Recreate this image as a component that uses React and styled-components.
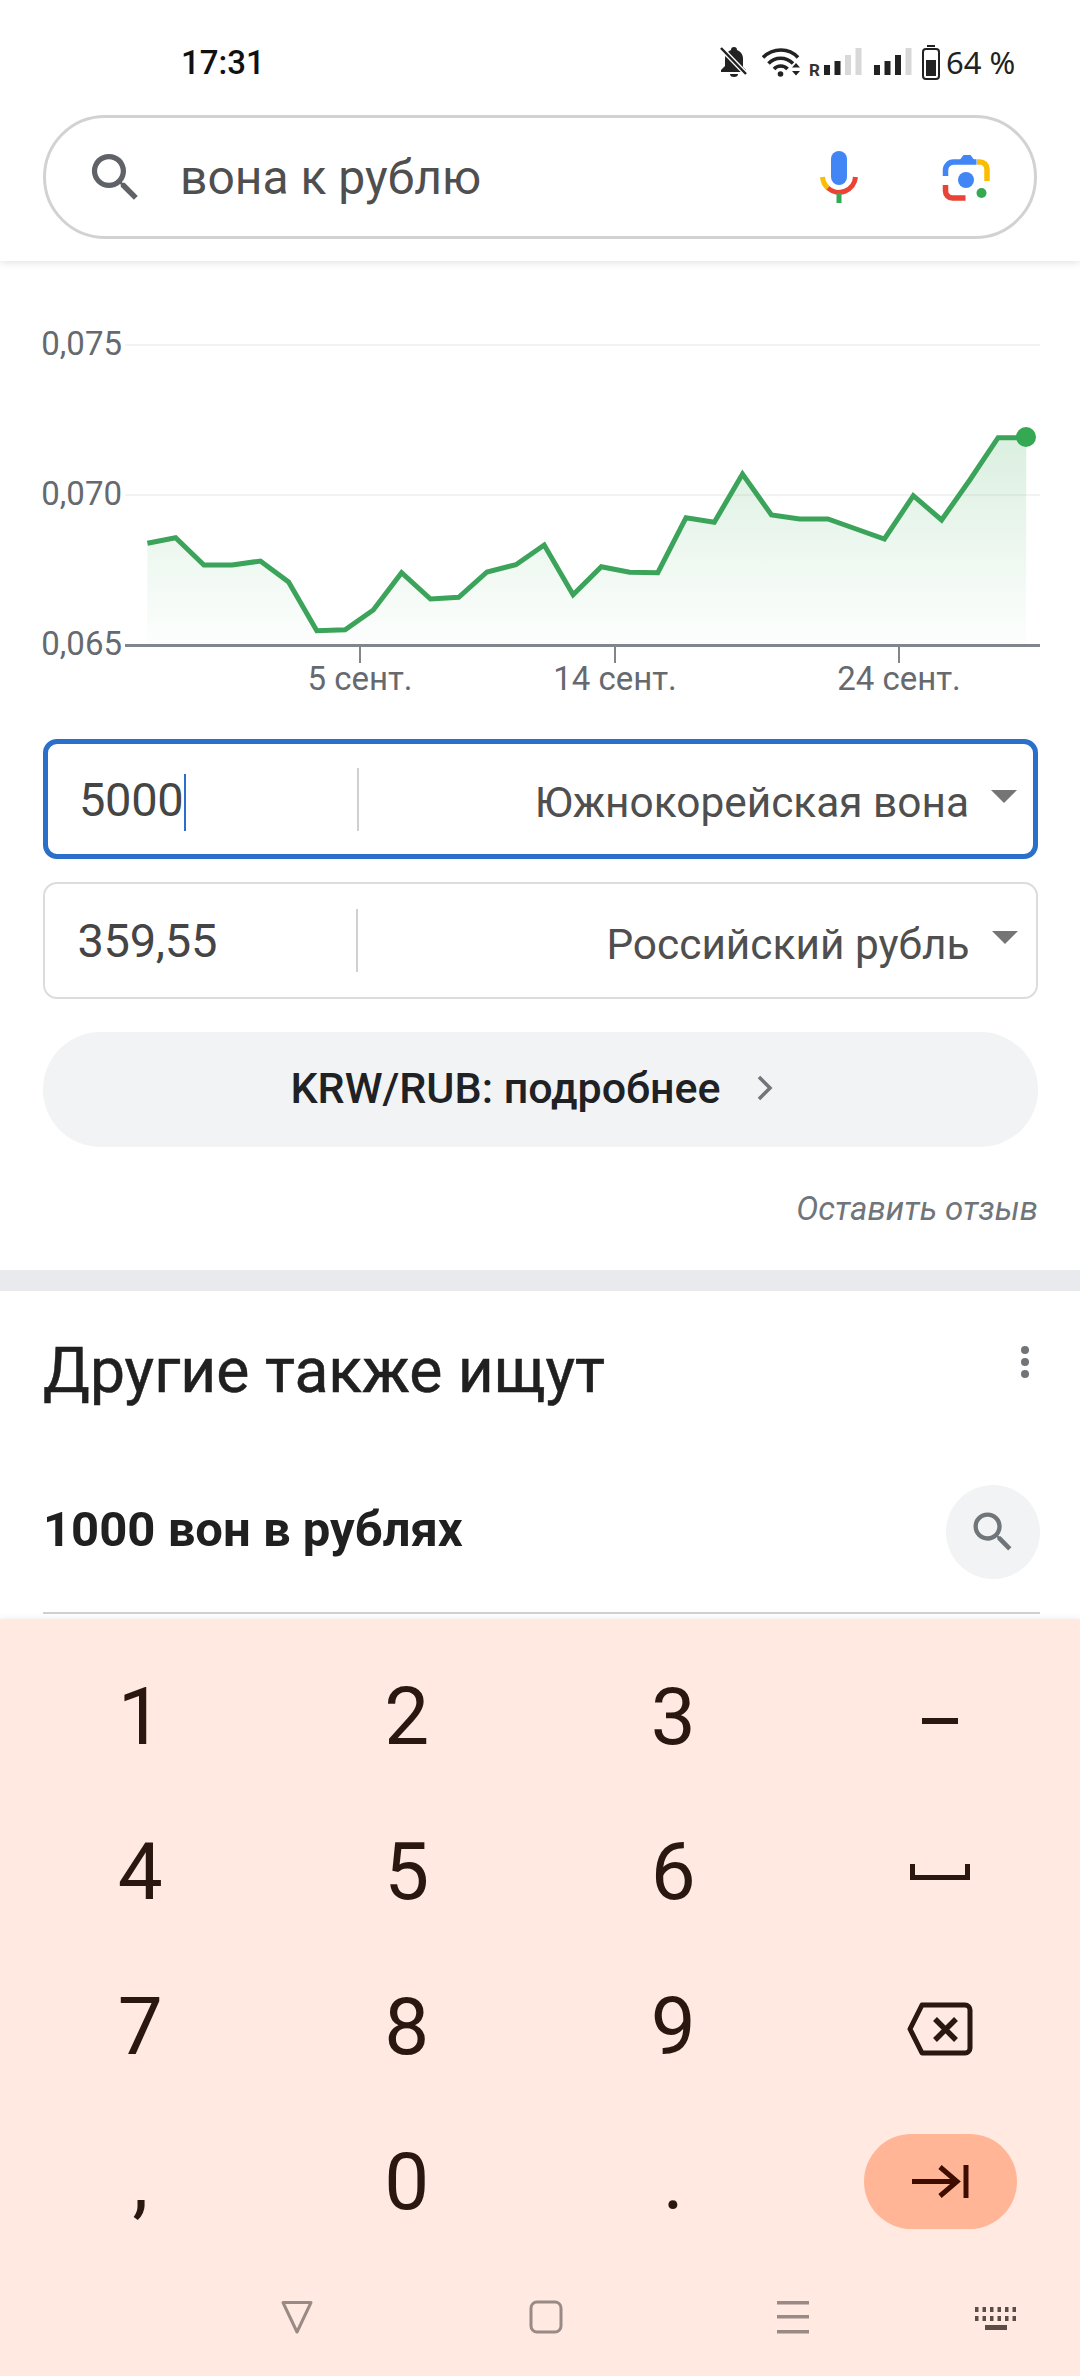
import React from "react";
import styled, { createGlobalStyle } from "styled-components";

const Global = createGlobalStyle`
  html, body { margin: 0; padding: 0; background: #fff; }
  * { box-sizing: border-box; }
  body { font-family: Roboto, "Noto Sans", sans-serif; }
`;

const Page = styled.div`
  width: 1080px;
  height: 2376px;
  display: flex;
  flex-direction: column;
  overflow: hidden;
  background: #fff;
`;

const StatusBar = styled.div`
  height: 100px;
  padding: 24px 0 0 181px;
  display: flex;
  align-items: center;
  justify-content: space-between;
  color: #1c1c1c;
`;
const Time = styled.span`
  font-size: 33px;
  font-weight: 500;
  color: #111;
`;
const StatusRight = styled.div`
  display: flex;
  align-items: center;
  width: 360px;
  height: 76px;
  svg { display: block; flex: none; }
`;
const Percent = styled.span`
  font-family: "Noto Sans", Roboto, sans-serif;
  font-size: 31px;
  margin-left: 6px;
  color: #222;
  white-space: nowrap;
`;

const Header = styled.header`
  padding: 15px 43px 22px;
  background: #fff;
  box-shadow: 0 2px 7px rgba(60, 64, 67, 0.14);
  clip-path: inset(0 0 -20px 0);
  position: relative;
  z-index: 1;
`;
const SearchBox = styled.div`
  height: 124px;
  border: 3px solid #d2d2d2;
  border-radius: 62px;
  display: flex;
  align-items: center;
  padding: 0 42px 0 38px;
`;
const SearchText = styled.span`
  flex: 1;
  margin-left: 33px;
  font-size: 48px;
  color: #4f4f4f;
`;

const Main = styled.main`
  flex: 1;
  min-height: 0;
  overflow: hidden;
`;
const ChartSvg = styled.svg`
  display: block;
  width: 1080px;
  height: 440px;
  text { font-family: Roboto, sans-serif; font-size: 33px; fill: #66696e; }
`;

const Converter = styled.section`
  margin-top: 38px;
  padding: 0 42px 0 43px;
  display: flex;
  flex-direction: column;
`;
const Field = styled.div`
  height: ${(p) => (p.$active ? 120 : 117)}px;
  margin-bottom: ${(p) => (p.$active ? 23 : 33)}px;
  border: ${(p) => (p.$active ? "5px solid #2a6fc9" : "2.5px solid #dcdcdc")};
  border-radius: 14px;
  display: flex;
  align-items: center;
  padding-left: ${(p) => (p.$active ? 31 : 32.5)}px;
`;
const Amount = styled.div`
  width: 280px;
  height: 63px;
  border-right: 2px solid #d0d0d0;
  display: flex;
  align-items: center;
  font-size: 47px;
  letter-spacing: -0.3px;
  color: #454545;
`;
const Caret = styled.span`
  width: 2px;
  height: 57px;
  background: #2a6fc9;
  margin: 6px 0 0 1px;
`;
const Unit = styled.div`
  flex: 1;
  display: flex;
  align-items: center;
  justify-content: flex-end;
  font-size: 42.4px;
  color: #4f4f4f;
  padding-right: ${(p) => (p.$active ? 16 : 18.5)}px;
  span { padding-top: 7px; }
`;
const Caretdown = styled.i`
  width: 0;
  height: 0;
  margin: -6px 0 0 22px;
  border-left: 13px solid transparent;
  border-right: 13px solid transparent;
  border-top: 13px solid #757575;
`;
const MoreButton = styled.div`
  height: 115px;
  border-radius: 58px;
  background: #f1f3f4;
  display: flex;
  align-items: center;
  justify-content: center;
  gap: 35px;
  font-size: 43px;
  font-weight: 500;
  color: #202124;
  padding: 0 18px 4px 0;
`;
const Feedback = styled.div`
  margin-top: 42px;
  height: 40px;
  line-height: 40px;
  text-align: right;
  font-size: 33px;
  font-style: italic;
  color: #70757a;
`;
const Band = styled.div`
  margin-top: 41px;
  height: 21px;
  background: #e8eaed;
`;
const Related = styled.section`
  padding: 0 40px 0 43px;
`;
const RelatedHead = styled.div`
  height: 162px;
  padding-top: 45px;
  display: flex;
  justify-content: space-between;
  align-items: flex-start;
`;
const Heading = styled.h2`
  margin: 0;
  font-size: 62.4px;
  line-height: 70px;
  font-weight: 400;
  color: #202020;
  -webkit-text-stroke: 0.5px #202020;
`;
const Dots = styled.div`
  width: 8px;
  margin: 10px 11px 0 0;
  display: flex;
  flex-direction: column;
  gap: 4px;
  i { display: block; width: 8px; height: 8px; border-radius: 50%; background: #70757a; }
`;
const Suggestion = styled.div`
  display: flex;
  align-items: center;
  justify-content: space-between;
  margin-top: 32px;
  padding-bottom: 33px;
  border-bottom: 2px solid #d0d0d0;
  font-size: 49px;
  font-weight: 700;
  color: #202020;
  span { padding-bottom: 6px; }
`;
const RoundIcon = styled.div`
  width: 94px;
  height: 94px;
  border-radius: 50%;
  background: #f1f3f4;
  display: flex;
  align-items: center;
  justify-content: center;
`;

const Keyboard = styled.section`
  height: 757px;
  flex: none;
  background: #ffe9e1;
  box-shadow: 0 -2px 5px rgba(0, 0, 0, 0.05);
  position: relative;
  z-index: 1;
  display: flex;
  flex-direction: column;
`;
const Keys = styled.div`
  padding: 20px 7px 0;
  display: grid;
  grid-template-columns: repeat(4, 1fr);
  grid-auto-rows: 155px;
`;
const Key = styled.div`
  display: flex;
  align-items: center;
  justify-content: center;
  font-size: 80px;
  color: #2a1710;
`;
const EnterKey = styled.div`
  width: 153px;
  height: 95px;
  margin-left: 2px;
  border-radius: 48px;
  background: #ffb596;
  display: flex;
  align-items: center;
  justify-content: center;
`;
const NavBar = styled.nav`
  flex: 1;
  display: grid;
  grid-template-columns: 280px 249px 247px 199px auto;
  align-items: center;
  padding-bottom: 2px;
  svg { display: block; }
`;
const NavSlot = styled.div`
  grid-column: ${(p) => p.$col};
`;

const SearchIcon = ({ size, color }) => (
  <svg width={size} height={size} viewBox="0 0 24 24" fill={color} style={{ flex: "none" }}>
    <path d="M15.5 14h-.79l-.28-.27A6.471 6.471 0 0 0 16 9.5 6.5 6.5 0 1 0 9.5 16c1.61 0 3.09-.59 4.23-1.57l.27.28v.79l5 4.99L20.49 19l-4.99-5zm-6 0C7.01 14 5 11.99 5 9.5S7.01 5 9.5 5 14 7.01 14 9.5 11.99 14 9.5 14z" />
  </svg>
);

const MicIcon = () => (
  <svg width="44" height="56" viewBox="816 149 44 56" fill="none" style={{ flex: "none", marginRight: 81 }}>
    <rect x="830" y="151" width="16" height="34" rx="8" fill="#4285f4" />
    <path d="M821.5 177a16.5 16.5 0 0 0 6 11.5" stroke="#fbbc04" strokeWidth="5" />
    <path d="M827 188a16.5 16.5 0 0 0 27.5-11" stroke="#ea4335" strokeWidth="5" />
    <rect x="835.5" y="193" width="5" height="10" fill="#34a853" />
  </svg>
);

const LensIcon = () => (
  <svg width="50" height="52" viewBox="940 150 50 52" fill="none" style={{ flex: "none" }}>
    <path d="M943.5 175v-6a8 8 0 0 1 8-8h23" stroke="#4285f4" strokeWidth="5.5" />
    <path d="M957 160l4.5-6h7l6 8z" fill="#4285f4" />
    <path d="M975 161h3a7 7 0 0 1 7 7v12" stroke="#fbbc04" strokeWidth="5.5" />
    <path d="M943.5 184v6a7 7 0 0 0 7 7h13" stroke="#ea4335" strokeWidth="5.5" />
    <circle cx="964" cy="179" r="8" fill="#4285f4" />
    <circle cx="979.5" cy="192" r="5" fill="#34a853" />
  </svg>
);

const BellOff = () => (
  <svg width="29" height="32" viewBox="0 0 29 32">
    <path d="M14 1c-2 0-3 1-3 3C7 5.500 5 9 5 13v7l-4 4v2h25v-2l-3-3V13c0-4-2-7.500-6-9 0-2-1-3-3-3z" fill="#222" />
    <path d="M10 28h8a4 3 0 0 1-8 0z" fill="#222" />
    <path d="M2 3l25 26" stroke="#fff" strokeWidth="5" />
    <path d="M1 2l25 26" stroke="#222" strokeWidth="2.500" />
  </svg>
);

const Wifi = () => (
  <svg width="41" height="32" viewBox="0 0 41 32" fill="none" style={{ marginLeft: 13 }} stroke="#222" strokeWidth="3.500">
    <path d="M1 11.500C11 1.500 27 1.500 36 11.500" />
    <path d="M6.500 17.500C13 10.500 24 10.500 31 17.500" />
    <path d="M12 23c3.500-4 10-4 13.500 0" />
    <circle cx="18.500" cy="28" r="2.800" fill="#222" stroke="none" />
    <path d="M30 21.500l4-4.500 4 4.500zM30 25l4 4.500 4-4.500z" fill="#222" stroke="none" />
  </svg>
);

const Signal = ({ r, dark, ...rest }) => {
  const hs = [10, 14, 20, 27];
  const off = r ? 15 : 0;
  return (
    <svg width={off + 38} height="32" viewBox={`0 0 ${off + 38} 32`} {...rest}>
      {r && (
        <text x="0" y="30" fontFamily="Roboto, sans-serif" fontSize="17" fontWeight="700" fill="#333">
          R
        </text>
      )}
      {hs.map((h, i) => (
        <rect key={i} x={off + i * 10.500} y={29 - h} width="6" height={h} fill={i < dark ? "#222" : "#d8d8d8"} />
      ))}
    </svg>
  );
};

const Battery = () => (
  <svg width="18" height="35" viewBox="0 0 18 35" fill="none" style={{ marginLeft: 10 }}>
    <rect x="5" y="0" width="8" height="2" fill="#222" />
    <rect x="1" y="4" width="16" height="30" rx="3" stroke="#222" strokeWidth="2" />
    <rect x="4" y="15" width="10" height="16" fill="#222" />
  </svg>
);

const raw = [
  [214, 730], [255, 713], [296, 795], [337, 795], [378, 783], [419, 846], [460, 992], [501, 989],
  [542, 930], [583, 818], [625, 897], [666, 892], [707, 816], [749, 794], [790, 735], [832, 884],
  [873, 800], [914, 817], [955, 818], [996, 653], [1037, 667], [1078, 522], [1120, 645], [1161, 657],
  [1202, 657], [1243, 687], [1284, 717], [1326, 587], [1367, 660], [1408, 540], [1449, 413], [1490, 413],
];
const pts = raw.map(([x, y]) => [+(x / 1.4518).toFixed(1), +(300 + y / 3).toFixed(1)]);
const linePts = pts.map((p) => p.join(",")).join(" ");
const areaPts = `147,645 ${linePts} 1026,645`;

const Chart = () => (
  <ChartSvg viewBox="0 261 1080 440">
    <defs>
      <linearGradient id="area" x1="0" y1="0" x2="0" y2="1">
        <stop offset="0" stopColor="#34a853" stopOpacity="0.18" />
        <stop offset="1" stopColor="#34a853" stopOpacity="0.01" />
      </linearGradient>
    </defs>
    <path d="M125 345H1040M125 495H1040" stroke="#f3f3f3" strokeWidth="2" />
    <polygon points={areaPts} fill="url(#area)" />
    <polyline points={linePts} fill="none" stroke="#3ba35a" strokeWidth="5" strokeLinejoin="miter" />
    <circle cx="1026" cy="437" r="10" fill="#34a853" />
    <path d="M125 645.500H1040" stroke="#80868b" strokeWidth="3" />
    <path d="M360 645V663M615 645V663M899 645V663" stroke="#80868b" strokeWidth="2" />
    <text x="122" y="355" textAnchor="end">0,075</text>
    <text x="122" y="505" textAnchor="end">0,070</text>
    <text x="122" y="655" textAnchor="end">0,065</text>
    <text x="360" y="690" textAnchor="middle">5 сент.</text>
    <text x="615" y="690" textAnchor="middle">14 сент.</text>
    <text x="899" y="690" textAnchor="middle">24 сент.</text>
  </ChartSvg>
);

const ICON = "#2a1710";

const App = () => (
  <Page>
    <Global />
    <StatusBar>
      <Time>17:31</Time>
      <StatusRight>
        <BellOff />
        <Wifi />
        <Signal r dark={2} style={{ marginLeft: 6 }} />
        <Signal dark={3} style={{ marginLeft: 12 }} />
        <Battery />
        <Percent>64 %</Percent>
      </StatusRight>
    </StatusBar>
    <Header>
      <SearchBox>
        <SearchIcon size={63} color="#5f6368" />
        <SearchText>вона к рублю</SearchText>
        <MicIcon />
        <LensIcon />
      </SearchBox>
    </Header>
    <Main>
      <Chart />
      <Converter>
        <Field $active>
          <Amount>
            5000
            <Caret />
          </Amount>
          <Unit $active>
            <span>Южнокорейская вона</span>
            <Caretdown />
          </Unit>
        </Field>
        <Field>
          <Amount>359,55</Amount>
          <Unit>
            <span>Российский рубль</span>
            <Caretdown />
          </Unit>
        </Field>
        <MoreButton>
          KRW/RUB: подробнее
          <svg width="17" height="26" viewBox="0 0 17 26" fill="none">
            <path d="M3 2l11 11L3 24" stroke="#70757a" strokeWidth="3.500" />
          </svg>
        </MoreButton>
        <Feedback>Оставить отзыв</Feedback>
      </Converter>
      <Band />
      <Related>
        <RelatedHead>
          <Heading>Другие также ищут</Heading>
          <Dots>
            <i />
            <i />
            <i />
          </Dots>
        </RelatedHead>
        <Suggestion>
          <span>1000 вон в рублях</span>
          <RoundIcon>
            <SearchIcon size={52} color="#70757a" />
          </RoundIcon>
        </Suggestion>
      </Related>
    </Main>
    <Keyboard>
      <Keys>
        <Key>1</Key>
        <Key>2</Key>
        <Key>3</Key>
        <Key>
          <svg width="36" height="24" viewBox="0 0 36 24" style={{ marginTop: 9 }}>
            <rect x="0" y="9" width="36" height="6" fill={ICON} />
          </svg>
        </Key>
        <Key>4</Key>
        <Key>5</Key>
        <Key>6</Key>
        <Key>
          <svg width="60" height="18" viewBox="0 0 60 18" fill="none" style={{ marginTop: 2 }}>
            <path d="M2.500 0v13.500h55V0" stroke={ICON} strokeWidth="5" />
          </svg>
        </Key>
        <Key>7</Key>
        <Key>8</Key>
        <Key>9</Key>
        <Key>
          <svg width="66" height="54" viewBox="0 0 66 54" fill="none" style={{ marginTop: 4 }}>
            <path d="M3 27L15 3h43a5 5 0 0 1 5 5v38a5 5 0 0 1-5 5H15z" stroke={ICON} strokeWidth="5" strokeLinejoin="round" />
            <path d="M28 17l21 21M49 17L28 38" stroke={ICON} strokeWidth="5.500" />
          </svg>
        </Key>
        <Key>,</Key>
        <Key>0</Key>
        <Key>.</Key>
        <Key>
          <EnterKey>
            <svg width="57" height="33" viewBox="0 0 57 33" fill="none">
              <path d="M0 16.500H44M28 2l17 14.500L28 31" stroke="#3e0d00" strokeWidth="5" />
              <path d="M54 0v33" stroke="#3e0d00" strokeWidth="5" />
            </svg>
          </EnterKey>
        </Key>
      </Keys>
      <NavBar>
        <NavSlot $col={2}>
          <svg width="34" height="34" viewBox="0 0 34 34" fill="none">
            <path d="M3 2.500h28L17 32z" stroke="#9a8a85" strokeWidth="3" strokeLinejoin="round" />
          </svg>
        </NavSlot>
        <NavSlot $col={3}>
          <svg width="34" height="34" viewBox="0 0 34 34" fill="none">
            <rect x="2" y="2" width="30" height="30" rx="6" stroke="#9a8a85" strokeWidth="3" />
          </svg>
        </NavSlot>
        <NavSlot $col={4}>
          <svg width="34" height="34" viewBox="0 0 34 34" fill="#9a8a85">
            <rect x="1" y="1" width="32" height="3.500" />
            <rect x="1" y="15" width="32" height="3.500" />
            <rect x="1" y="30" width="32" height="3.500" />
          </svg>
        </NavSlot>
        <NavSlot $col={5}>
          <svg width="42" height="34" viewBox="0 0 42 34" fill="#5a4c47">
            {[0, 7.5, 15, 22.5, 30, 37.5].map((x) => (
              <React.Fragment key={x}>
                <rect x={x} y="7" width="3.500" height="5" />
                <rect x={x} y="16" width="3.500" height="5" />
              </React.Fragment>
            ))}
            <rect x="10" y="25" width="22" height="5" />
          </svg>
        </NavSlot>
      </NavBar>
    </Keyboard>
  </Page>
);

export default App;
